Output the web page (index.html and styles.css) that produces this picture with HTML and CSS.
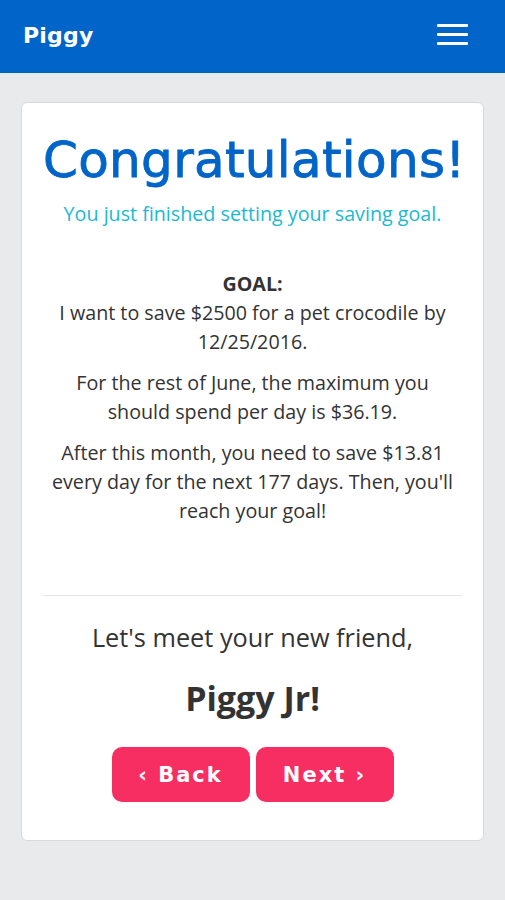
FILE: index.html
```html
<!DOCTYPE html>
<html>
<head>
<meta charset="utf-8">
<link rel="stylesheet" href="styles.css">
</head>
<body>
<nav class="navbar">
  <span class="brand">Piggy</span>
  <span class="burger"><i></i><i></i><i></i></span>
</nav>
<main class="page">
  <section class="card">
    <h1 class="title">Congratulations!</h1>
    <p class="subtitle">You just finished setting your saving goal.</p>
    <div class="summary">
      <p><strong>GOAL:</strong><br>I want to save $2500 for a pet crocodile by 12/25/2016.</p>
      <p>For the rest of June, the maximum you should spend per day is $36.19.</p>
      <p>After this month, you need to save $13.81 every day for the next 177 days. Then, you'll reach your goal!</p>
    </div>
    <hr class="divider">
    <p class="meet">Let's meet your new friend,</p>
    <p class="friend">Piggy Jr!</p>
    <div class="actions">
      <button class="btn">‹ Back</button>
      <button class="btn">Next ›</button>
    </div>
  </section>
</main>
</body>
</html>
```
FILE: styles.css
```css
* { box-sizing: border-box; }
html, body { margin: 0; padding: 0; }
body {
  background: #e9eaec;
  font-family: "Open Sans", "Liberation Sans", sans-serif;
  color: #333;
  width: 505px;
  min-height: 900px;
}
.navbar {
  height: 73px;
  background: #0064c8;
  display: flex;
  align-items: center;
  justify-content: space-between;
  padding: 0 37px 0 23px;
}
.brand {
  color: #fff;
  font-family: "DejaVu Sans", sans-serif;
  font-weight: bold;
  font-size: 22px;
  letter-spacing: 0.2px;
  margin-top: -2px;
}
.burger {
  display: flex;
  flex-direction: column;
  gap: 6px;
  width: 31px;
  margin-top: -4px;
}
.burger i {
  display: block;
  height: 3px;
  background: #fff;
  border-radius: 1px;
}
.page {
  padding: 29px 21px 60px 21px;
}
.card {
  background: #fff;
  border: 1px solid #d9d9d9;
  border-radius: 6px;
  padding: 26px 21px 38px 21px;
  text-align: center;
}
.title {
  margin: 0;
  font-family: "DejaVu Sans", sans-serif;
  font-weight: normal;
  font-size: 50px;
  line-height: 62px;
  color: #0064c8;
  letter-spacing: 0.3px;
  -webkit-text-stroke: 0.8px #0064c8;
}
.subtitle {
  margin: 10px 0 0 0;
  color: #1bb9d1;
  font-size: 19.7px;
  line-height: 26px;
}
.summary {
  margin-top: 42px;
  font-size: 19.7px;
  line-height: 29px;
}
.summary p {
  margin: 0 0 12px 0;
}
.divider {
  border: 0;
  border-top: 1px solid #e6e6e6;
  margin: 70px 0 0 0;
}
.meet {
  margin: 24px 0 0 0;
  font-size: 25.3px;
  line-height: 34px;
}
.friend {
  margin: 24px 0 0 0;
  font-size: 34px;
  font-weight: bold;
  line-height: 40px;
}
.actions {
  margin-top: 29px;
  display: flex;
  justify-content: center;
  gap: 6px;
}
.btn {
  width: 138px;
  height: 55px;
  border: 0;
  border-radius: 10px;
  background: #f72e62;
  color: #fff;
  font-family: "DejaVu Sans", sans-serif;
  font-weight: bold;
  font-size: 21px;
  letter-spacing: 2px;
  padding: 0;
}
```
